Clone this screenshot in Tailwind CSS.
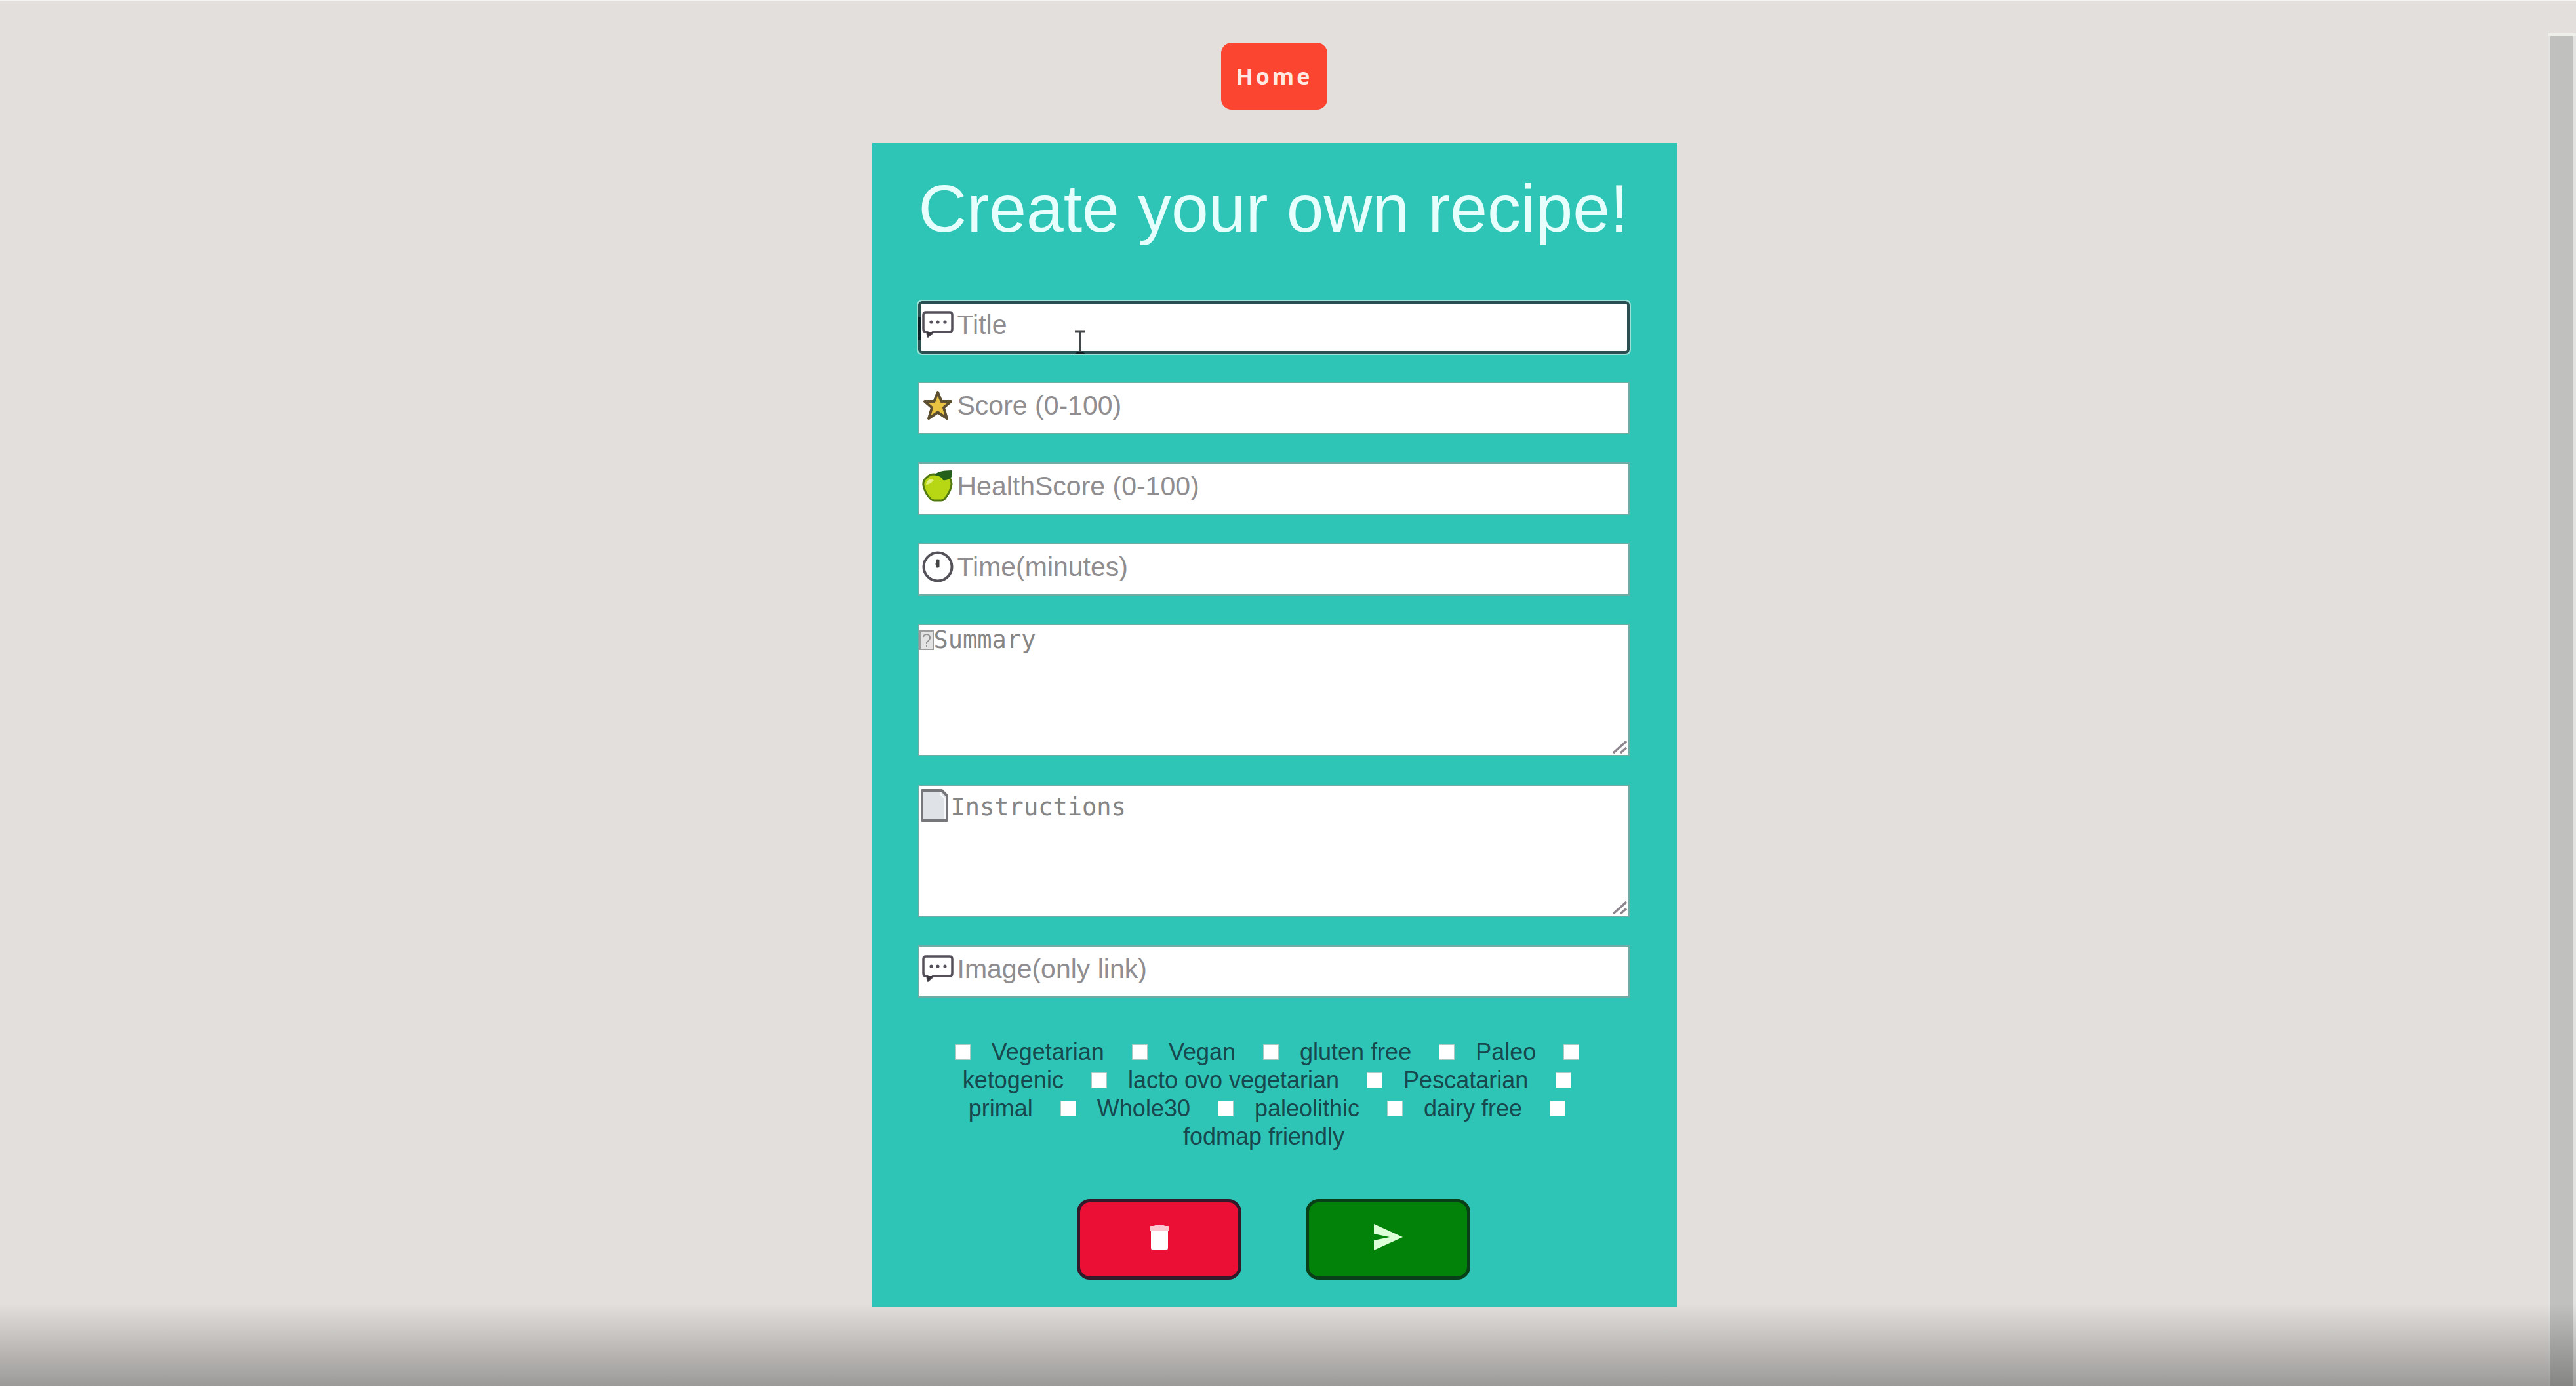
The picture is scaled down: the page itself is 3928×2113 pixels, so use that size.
<!DOCTYPE html>
<html lang="en">
<head>
<meta charset="utf-8">
<meta name="viewport" content="width=device-width, initial-scale=1">
<title>Create your own recipe!</title>
<script src="https://cdn.jsdelivr.net/npm/@tailwindcss/browser@4"></script>
</head>
<body class="relative flex min-h-screen border-t-2 border-[#f5f4f2] bg-[#e2dfdc] font-['Liberation_Sans',Arial,sans-serif]">

<svg class="hidden" aria-hidden="true">
  <symbol id="speech" viewBox="0 0 48 48">
    <path d="M6 5h36q4 0 4 4v22q0 4-4 4H17l-8 7-1-7H6q-4 0-4-4V9q0-4 4-4z" fill="#fff" stroke="#55505a" stroke-width="3.5" stroke-linejoin="round"/>
    <path d="M7 35h10l-8 8z" fill="#3b383f"/>
    <circle cx="14" cy="20" r="2.6" fill="#55505a"/><circle cx="24" cy="20" r="2.6" fill="#55505a"/><circle cx="35" cy="20" r="2.6" fill="#55505a"/>
  </symbol>
  <symbol id="grip" viewBox="0 0 22 22">
    <path d="M1 21L21 3M12 21l9-8" stroke="#8f8790" stroke-width="3.5" fill="none"/>
  </symbol>
</svg>

<main class="flex flex-1 flex-col items-center pt-[63px]">
  <a href="#" class="flex h-[102px] w-[162px] items-center justify-center rounded-[16px] bg-[#fb4531] font-['Open_Sans',sans-serif] text-[34px] font-bold tracking-[4px] text-[#ffe9e2]">Home</a>

  <form class="mt-[51px] flex w-[1227px] flex-col bg-[#2fc5b6] pt-[42px] pr-[72px] pb-[41px] pl-[70px]">
    <h1 class="text-center text-[102px] leading-[116px] whitespace-nowrap text-[#e6fffc]">Create your own recipe!</h1>

    <div class="mt-[83px] flex flex-col gap-[43px]">
      <label class="relative flex h-[80px] items-center rounded-[6px] border-4 border-[#2b4f50] bg-white pb-2 pl-[2px] outline-2 outline-[#9fe3d8]">
        <span class="absolute top-[20px] -left-1 h-[36px] w-[5px] bg-[#0c1f24]"></span>
        <svg class="size-[48px]"><use href="#speech"/></svg>
        <input type="text" aria-label="Title" placeholder="Title" class="ml-1.5 min-w-0 flex-1 text-[41px] leading-[48px] outline-none placeholder:text-[#8f8d8f]">
        <svg class="absolute top-[40px] left-[233px] h-[38px] w-[20px]" viewBox="0 0 20 38"><path d="M2 2h16M10 2v32" stroke="#44474a" stroke-width="3" fill="none"/><path d="M2 37q2-4 8-4t8 4z" fill="#111b1d"/></svg>
      </label>
      <label class="flex h-[80px] items-center border-2 border-[#6fada4] bg-white pb-2 pl-1">
        <svg class="size-[48px]" viewBox="0 0 48 48"><path d="M24 4l5.500 14H44L33 27.500l5 16.500-14-9.500L10 44l5-16.500L4 18h14.500z" fill="#e9c342" stroke="#5d5030" stroke-width="4" stroke-linejoin="round"/></svg>
        <input type="text" aria-label="Score" placeholder="Score (0-100)" class="ml-1.5 min-w-0 flex-1 text-[41px] leading-[48px] outline-none placeholder:text-[#8f8d8f]">
      </label>
      <label class="flex h-[80px] items-center border-2 border-[#6fada4] bg-white pb-2 pl-1">
        <svg class="size-[48px]" viewBox="0 0 48 48"><path d="M18 6q-6 0-11 5-6 5-5 12 2 10 8 17 4 6 9 6h10q5 0 8-6 7-9 8-19Q45 12 37 8z" fill="#b7d614" stroke="#527a10" stroke-width="3"/><path d="M12 13q-5 3-6 9 6 0 12-7z" fill="#e2f080"/><path d="M19 7Q25 0 45 0v10q-5 6-13 5-2-6-13-8z" fill="#23611a"/></svg>
        <input type="text" aria-label="Health score" placeholder="HealthScore (0-100)" class="ml-1.5 min-w-0 flex-1 text-[41px] leading-[48px] outline-none placeholder:text-[#8f8d8f]">
      </label>
      <label class="flex h-[80px] items-center border-2 border-[#6fada4] bg-white pb-2 pl-1">
        <svg class="size-[48px]" viewBox="0 0 48 48"><circle cx="24" cy="24" r="21.500" fill="#fff" stroke="#55525a" stroke-width="4"/><path d="M24.500 13v12l-2-5z" fill="#333" stroke="#444" stroke-width="4"/></svg>
        <input type="text" aria-label="Time in minutes" placeholder="Time(minutes)" class="ml-1.5 min-w-0 flex-1 text-[41px] leading-[48px] outline-none placeholder:text-[#8f8d8f]">
      </label>
      <label class="relative flex h-[202px] items-start border-2 border-[#6fada4] bg-white">
        <svg class="mt-[8px] h-[30px] w-[22px]" viewBox="0 0 22 30"><path d="M1 1h20v28H1z" fill="#e3e3e3" stroke="#9b9b9b" stroke-width="2"/><path d="M6 10q1-4 5-4t5 4-5 8v3M11 23v3" fill="none" stroke="#929292" stroke-width="2"/></svg>
        <textarea aria-label="Summary" placeholder="Summary" class="mt-px h-[190px] min-w-0 flex-1 resize-none font-['DejaVu_Sans_Mono',monospace] text-[37px] leading-[44px] outline-none placeholder:text-[#858585]"></textarea>
        <svg class="absolute right-[2px] bottom-[2px] size-[22px]"><use href="#grip"/></svg>
      </label>
      <label class="relative flex h-[202px] items-start border-2 border-[#6fada4] bg-white pl-[2px]">
        <svg class="mt-[5px] h-[50px] w-[42px]" viewBox="0 0 42 50"><path d="M2 2h30l8 8v38H2z" fill="#dfe3e7" stroke="#77777b" stroke-width="4" stroke-linejoin="round"/><path d="M30 5l1 4 6 5v32" fill="none" stroke="#f7f8f9" stroke-width="2"/></svg>
        <textarea aria-label="Instructions" placeholder="Instructions" class="mt-[11px] ml-1 h-[180px] min-w-0 flex-1 resize-none font-['DejaVu_Sans_Mono',monospace] text-[37px] leading-[44px] outline-none placeholder:text-[#858585]"></textarea>
        <svg class="absolute right-[2px] bottom-[2px] size-[22px]"><use href="#grip"/></svg>
      </label>
      <label class="flex h-[80px] items-center border-2 border-[#6fada4] bg-white pb-2 pl-1">
        <svg class="size-[48px]"><use href="#speech"/></svg>
        <input type="text" aria-label="Image link" placeholder="Image(only link)" class="ml-1.5 min-w-0 flex-1 text-[41px] leading-[48px] outline-none placeholder:text-[#8f8d8f]">
      </label>
    </div>

    <div class="mt-[61px] flex flex-wrap items-center justify-center gap-x-[32px] pr-[42px] pl-[22px] text-[36px] leading-[43px] text-[#17484e] [&_input]:size-[24px] [&_input]:appearance-none [&_input]:border [&_input]:border-[#a9c9c2] [&_input]:bg-white [&_label]:mr-[10px]">
      <input type="checkbox" id="vegetarian"><label for="vegetarian">Vegetarian</label>
      <input type="checkbox" id="vegan"><label for="vegan">Vegan</label>
      <input type="checkbox" id="gluten"><label for="gluten">gluten free</label>
      <input type="checkbox" id="paleo"><label for="paleo">Paleo</label>
      <input type="checkbox" id="keto"><label for="keto">ketogenic</label>
      <input type="checkbox" id="lacto"><label for="lacto">lacto ovo vegetarian</label>
      <input type="checkbox" id="pesc"><label for="pesc">Pescatarian</label>
      <input type="checkbox" id="primal"><label for="primal">primal</label>
      <input type="checkbox" id="whole"><label for="whole">Whole30</label>
      <input type="checkbox" id="paleolithic"><label for="paleolithic">paleolithic</label>
      <input type="checkbox" id="dairy"><label for="dairy">dairy free</label>
      <input type="checkbox" id="fodmap"><label for="fodmap">fodmap friendly</label>
    </div>

    <div class="mt-[74px] flex justify-center gap-[98px]">
      <button type="reset" aria-label="Clear" class="flex h-[123px] w-[251px] items-center justify-center rounded-[20px] border-[5px] border-[#33192a] bg-[#ec0f35] pb-2">
        <svg class="h-[40px] w-[30px]" viewBox="0 0 30 40"><path d="M9 1h12l2 2h6v7H1V3h6z" fill="#fbc6d0"/><path d="M2 10h26v26q0 4-4 4H6q-4 0-4-4z" fill="#fff"/></svg>
      </button>
      <button type="submit" aria-label="Send" class="flex h-[123px] w-[251px] items-center justify-center rounded-[20px] border-[5px] border-[#083f16] bg-[#03820a] pb-2">
        <svg class="h-[40px] w-[44px]" viewBox="0 0 44 40"><path d="M0 0l44 20L0 40V25l24-5L0 15z" fill="#dcffd8"/></svg>
      </button>
    </div>
  </form>
</main>

<div class="mt-[49px] w-[42px] border-t-4 border-[#eeeeeb] bg-[#e3e4e1] pr-[5px] pl-[3px]">
  <div class="h-full bg-[#c0c0be]"></div>
</div>

<div class="pointer-events-none absolute inset-x-0 bottom-0 h-[126px] bg-linear-to-b from-black/0 to-black/31"></div>
</body>
</html>
